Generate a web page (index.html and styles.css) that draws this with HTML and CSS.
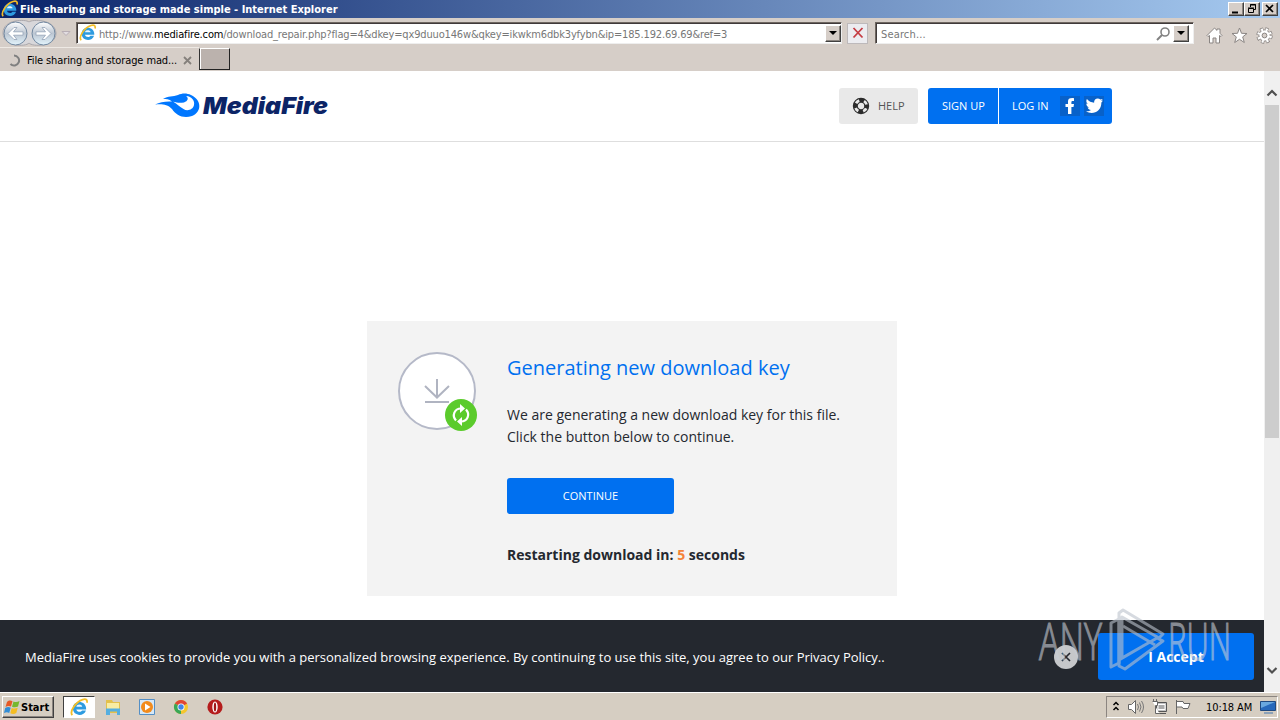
FILE: index.html
```html
<!DOCTYPE html>
<html lang="en">
<head>
    <meta charset="UTF-8">
    <meta name="viewport" content="width=device-width, initial-scale=1.0">
    <title>File sharing and storage made simple</title>
    <link rel="stylesheet" href="styles.css">
</head>
<body>
    <svg class="defs" width="0" height="0">
        <linearGradient id="nav-fill" x2="0" y2="1">
            <stop offset="0" stop-color="#ffffff"/>
            <stop offset=".5" stop-color="#bcc6d2"/>
            <stop offset="1" stop-color="#e3f4fc"/>
        </linearGradient>
        <symbol id="ie" viewBox="0 0 18 18">
            <path d="M15.300 10.800H6c.4 2.500 4.400 3 5.400 1h3.700C13.200 18 2.700 17.300 2.700 9.800c0-8.300 13.100-8 12.600 1z" fill="#2d9be0"/>
            <path d="M6 8.200h5.600c-.4-2.600-5.200-2.600-5.600 0z" fill="#eaf6fd"/>
            <path d="M2.200 16.300C-.8 13 5.500 3.400 12 1.500c3.600-1 4.600.4 4 3" fill="none" stroke="#f2bd27" stroke-width="1.700"/>
        </symbol>
    </svg>

    <div class="titlebar">
        <svg class="title-icon" width="18" height="18"><use href="#ie"/></svg>
        <span class="title-text">File sharing and storage made simple - Internet Explorer</span>
        <div class="window-buttons">
            <span class="win-btn"><svg width="14" height="12"><path d="M3 9.500h6" stroke="#000" stroke-width="2"/></svg></span>
            <span class="win-btn"><svg width="14" height="12"><path d="M5.500 4V1.500h5v5H9M5 2h6M3.500 5.500h5v4h-5zM3 5h6" fill="none" stroke="#000"/></svg></span>
            <span class="win-btn win-close"><svg width="14" height="12"><path d="M3 2l7 7M10 2L3 9" stroke="#000" stroke-width="1.700"/></svg></span>
        </div>
    </div>

    <div class="navbar">
        <svg class="nav-arrows" width="74" height="28">
            <path d="M3 14C3 0 26 0 29 3C32 0 55 0 56 14C56 28 32 28 29 24C26 28 3 28 3 14z" fill="#d8d7da" stroke="#aaa8ad"/>
            <g fill="url(#nav-fill)" stroke="#71879f">
                <circle cx="15.500" cy="14.500" r="11.500"/>
                <circle cx="43.500" cy="14.500" r="11.500"/>
            </g>
            <g fill="#fff" stroke="#94a3b8" stroke-width=".8">
                <path d="M8 14.500l6-6h3l-3.500 4.300H23v3.400h-9.500L17 20.500h-3z"/>
                <path d="M51 14.500l-6-6h-3l3.500 4.300H36v3.400h9.500L42 20.500h3z"/>
            </g>
            <path d="M62 12.500h8l-4 4z" fill="#e2dde1" stroke="#b8aeb5"/>
        </svg>
        <div class="field address">
            <svg width="18" height="18"><use href="#ie"/></svg>
            <span class="url">http://www.<b>mediafire.com</b>/download_repair.php?flag=4&amp;dkey=qx9duuo146w&amp;qkey=ikwkm6dbk3yfybn&amp;ip=185.192.69.69&amp;ref=3</span>
            <span class="dropdown"></span>
        </div>
        <span class="stop"><svg width="12" height="12"><path d="M1.500 1l9 9.500M10.500 1l-9 9.500" stroke="#c53c43" stroke-width="1.800"/></svg></span>
        <div class="field search">
            <span class="placeholder">Search...</span>
            <svg width="15" height="15"><circle cx="9" cy="6" r="4" fill="none" stroke="#828282" stroke-width="1.600"/><path d="M6 9l-5 5" stroke="#828282" stroke-width="2"/></svg>
            <span class="dropdown"></span>
        </div>
        <div class="tools">
            <svg width="17" height="17"><path d="M1 8.500L8.500 1 11 3.400V2h3v4.300L16 8.500l-1 1-1.500-1V16H10v-5H7v5H3.500V8.500L2 9.500z" fill="#fff" stroke="#8a8583"/></svg>
            <svg width="17" height="17"><path d="M8.500 1l2 5.300 5.500.2-4.300 3.400 1.600 5.600-4.800-3.200-4.800 3.200 1.600-5.600L1 6.500l5.500-.2z" fill="#fff" stroke="#8a8583"/></svg>
            <svg width="17" height="17"><circle cx="8.500" cy="8.500" r="6.400" fill="none" stroke="#8a8583" stroke-width="3.600" stroke-dasharray="3 2.030"/><circle cx="8.500" cy="8.500" r="5.600" fill="#fff" stroke="#8a8583"/><circle cx="8.500" cy="8.500" r="6" fill="none" stroke="#fff" stroke-width="2.800" stroke-dasharray="2 2.712" stroke-dashoffset="-.5"/><circle cx="8.500" cy="8.500" r="2.400" fill="#d6cec8" stroke="#8a8583"/></svg>
        </div>
    </div>

    <div class="tabs">
        <div class="tab">
            <svg width="13" height="13"><path d="M6 1.500a5 5 0 1 1-3.500 8.500" fill="none" stroke="#808080" stroke-width="2"/></svg>
            <span class="tab-title">File sharing and storage mad...</span>
            <svg width="9" height="9"><path d="M1 1l7 7M8 1L1 8" stroke="#85807c" stroke-width="1.800"/></svg>
        </div>
        <div class="new-tab"></div>
    </div>

    <div class="viewport">
        <div class="page">
            <header class="header">
                <svg class="logo" width="175" height="28">
                    <path d="M0 12.500C5 10 11 9 17 9.500C14 7 11 7 8 7C13 3.500 18 5 23 3C27 1 32 1 36 3C47 8 47 20 37 24C28 27 21 23 17 17C12 12 7 12 0 12.500z" fill="#0077ff"/>
                    <path d="M18 9.500c4 1.500 7 1.500 11 1C33 9 34 6 31 4c6 .5 9 5 8 9-1 5-7 6.500-10.500 4-4-2-6-5-10.500-7.500z" fill="#fff"/>
                    <path d="M17 9c5 2 10 1 13-.5 2-1.500 1-4-2-4.500-4-1-7 1-11 5z" fill="#0077ff"/>
                    <text x="48" y="21.500" textLength="125" lengthAdjust="spacingAndGlyphs" class="logo-text">MediaFire</text>
                </svg>
                <a class="btn help">
                    <svg width="18" height="18"><circle cx="9" cy="9" r="5.700" fill="none" stroke="#2b2b2b" stroke-width="5"/><circle cx="9" cy="9" r="5.700" fill="none" stroke="#e9e9e9" stroke-width="2.800" stroke-dasharray="4 4.954" stroke-dashoffset="-2.477"/></svg>
                    <span>HELP</span>
                </a>
                <a class="btn signup"><span>SIGN UP</span></a>
                <a class="btn login"><span>LOG IN</span>
                    <svg class="facebook" width="20" height="20"><path d="M8 18v-7H5.500V8H8V5.500C8 3 9.500 1.800 14 2.200V5c-2-.2-2.600 0-2.600 1.400V8H14l-.5 3h-2.100v7z" fill="#fff"/></svg>
                    <svg class="twitter" width="20" height="20"><path d="M2 15.300c2 .2 3.700-.3 5-1.400-1.700-.2-2.900-1-3.400-2.500h1.500C3.300 10.800 2.300 9.500 2.300 7.600l1.600.4C2.200 6.600 1.900 4.800 2.900 3c2 2.300 4.400 3.500 7.200 3.700-.4-4.200 4.200-5.500 6.300-3.100L18.700 3l-1.500 2 1.900-.4-1.700 1.900C17.500 15.500 8.500 19.600 2 15.300z" fill="#fff"/></svg>
                </a>
            </header>

            <main class="main">
                <div class="card">
                    <svg class="card-icon" width="80" height="80">
                        <circle cx="39" cy="39" r="38" fill="#fff" stroke="#b5b9c8" stroke-width="2"/>
                        <path d="M39 27v18M27 34l12 11.500L51 34M27 50h24" fill="none" stroke="#b0b4c1" stroke-width="2"/>
                        <circle cx="63" cy="63" r="16" fill="#5bcb2c"/>
                        <path d="M58 68.500c-4.500-5-1.500-12 5-12M68 57.500c4.500 5 1.500 12-5 12" fill="none" stroke="#fff" stroke-width="2.200"/>
                        <path d="M62 52l5 4.500-5 4.500zM64 65l-5 4.500 5 4.500z" fill="#fff"/>
                    </svg>
                    <div class="card-body">
                        <h1>Generating new download key</h1>
                        <p>We are generating a new download key for this file.<br>Click the button below to continue.</p>
                        <a class="continue">CONTINUE</a>
                        <p class="countdown">Restarting download in: <span>5</span> seconds</p>
                    </div>
                </div>
            </main>

            <div class="cookies">
                <span class="cookies-text">MediaFire uses cookies to provide you with a personalized browsing experience. By continuing to use this site, you agree to our Privacy Policy..</span>
                <span class="dismiss"><svg width="10" height="10"><path d="M1 1l8 8M9 1L1 9" stroke="#24282f" stroke-width="1.700"/></svg></span>
                <a class="accept">I Accept</a>
            </div>
        </div>

        <div class="scrollbar">
            <svg width="16" height="34"><path d="M3.500 24.500L8 20l4.500 4.500" fill="none" stroke="#505050" stroke-width="2.200"/></svg>
            <div class="thumb"></div>
            <svg class="scroll-down" width="16" height="34"><path d="M3.500 10L8 14.500l4.500-4.500" fill="none" stroke="#505050" stroke-width="2.200"/></svg>
        </div>

        <svg class="watermark" width="200" height="80">
            <g class="watermark-text">
                <text x="4" y="53" textLength="63" lengthAdjust="spacingAndGlyphs">ANY</text>
                <text x="133" y="53" textLength="63" lengthAdjust="spacingAndGlyphs">RUN</text>
            </g>
            <g fill="none" stroke="#bcc3cd" stroke-width="3" stroke-linejoin="round">
                <path d="M84 56l-8 4V16l8-4z"/>
                <path d="M84 53V6l4-3 40 24-4 4-37-21v41l35-20 6 3-38 28-6-3v-6l24-14"/>
                <path d="M88 19l32 19"/>
            </g>
        </svg>
    </div>

    <div class="taskbar">
        <div class="start">
            <svg width="17" height="16"><path d="M3 3c2-2 4-1.500 5.500-.8L7 7.500C5 6.500 3 7 1.500 8z" fill="#e65a26"/><path d="M9.500 2.500c2 1 4 .7 6-.5L14 7.500c-2 1-4 1-6 .2z" fill="#77b82d"/><path d="M1.200 9c2-1 3.500-1.300 5.500-.3L5.200 14C3.500 13 2 13.200 0 14z" fill="#328dd6"/><path d="M7.700 9c2 .8 4 .7 6-.3L12.300 14c-2 1.200-4 1.200-6 .2z" fill="#f4bd22"/></svg>
            Start
        </div>
        <div class="task active"><svg width="19" height="19"><use href="#ie"/></svg></div>
        <div class="task"><svg width="18" height="18"><path d="M2 2h6l1 2h7v11H2z" fill="#e3c04c"/><path d="M3 5h12v6H3z" fill="#f8eca3"/><path d="M2 17v-6.500h14V17h-3v-3.500H6V17z" fill="#55aee0"/></svg></div>
        <div class="task"><svg width="18" height="18"><path d="M1.500 1.500h15v15h-15z" fill="#d6e8f7" stroke="#548fc5"/><circle cx="9" cy="9" r="6" fill="#f28b1c"/><path d="M7 5.500l5.500 3.500L7 12.500z" fill="#fff"/></svg></div>
        <div class="task"><svg width="16" height="16"><circle cx="8" cy="8" r="7" fill="#f5c62d"/><path d="M8 8L1.900 4.500a7 7 0 0 1 12.200 0z" fill="#e04535"/><path d="M8 8v7A7 7 0 0 1 1.900 4.500z" fill="#3aa757"/><circle cx="8" cy="8" r="3.500" fill="#fff"/><circle cx="8" cy="8" r="2.700" fill="#4284e8"/></svg></div>
        <div class="task"><svg width="18" height="18"><circle cx="9" cy="9" r="7.600" fill="#b51c1c"/><ellipse cx="9" cy="9" rx="2.700" ry="5.500" fill="#fff"/><ellipse cx="9" cy="9" rx="1.200" ry="4.600" fill="#a11616"/></svg></div>

        <div class="tray">
            <svg width="8" height="12"><path d="M1.500 4L4 1.500 6.500 4M1.500 9L4 6.500 6.500 9" fill="none" stroke="#000" stroke-width="1.500"/></svg>
            <svg width="17" height="16"><path d="M1.500 5.500h3l4-4v13l-4-4h-3z" fill="#fff" stroke="#666"/><path d="M10.500 5q2 3 0 6M12.500 3.500q3 4.500 0 9M14.500 2q4 6 0 12" fill="none" stroke="#777"/></svg>
            <svg width="17" height="16"><path d="M5.500 3.500h10v9h-10z" fill="#c4c4c4" stroke="#555"/><path d="M7 5.500h7v5H7z" fill="#aaa" stroke="#fff"/><path d="M8 14.500h7" stroke="#555"/><path d="M1.500 2.500h5v4h-2v8h4" fill="#fff" stroke="#666"/><path d="M2.500 0v3M5.500 0v3" stroke="#666"/></svg>
            <svg width="17" height="16"><path d="M1.500 1v14M2 2.500h6l1 2h6l-2 5H8l-1-1.500H2" fill="#fff" stroke="#666"/></svg>
            <span class="clock">10:18 AM</span>
            <svg width="16" height="14"><path d="M.5 1.500h15v9h-15z" fill="#2769bb" stroke="#204a80"/><path d="M1 2h14L1 8z" fill="#69a8df"/><path d="M4 13h9" stroke="#8ca2b8" stroke-width="2"/></svg>
        </div>
    </div>
</body>
</html>
```
FILE: styles.css
```css
* {
    box-sizing: border-box;
}

body {
    margin: 0;
    width: 1280px;
    height: 720px;
    overflow: hidden;
    display: flex;
    flex-direction: column;
    background-color: #d6cec8;
    font-family: 'Open Sans', sans-serif;
}

svg {
    display: block;
    flex: none;
}

.defs {
    position: absolute;
}

.titlebar,
.navbar,
.tabs,
.taskbar {
    display: flex;
    align-items: center;
    flex: none;
    font-family: 'DejaVu Sans Condensed', 'DejaVu Sans', sans-serif;
    font-stretch: condensed;
    font-size: 11px;
    white-space: nowrap;
}

/* window chrome */
.titlebar {
    height: 18px;
    padding: 0 2px 0 1px;
    background: linear-gradient(to right, #0a246a, #a6caf0);
    color: #fff;
    font-weight: bold;
}

.title-text {
    margin-left: 1px;
}

.window-buttons {
    display: flex;
    margin-left: auto;
}

.win-btn,
.dropdown {
    width: 16px;
    height: 14px;
    background-color: #d6cec8;
    border: 1px solid;
    border-color: #fff #404040 #404040 #fff;
    box-shadow: inset -1px -1px #8b8580;
}

.win-close {
    margin-left: 2px;
}

.navbar {
    height: 29px;
    padding-top: 1px;
}

.field {
    display: flex;
    align-items: center;
    height: 22px;
    background-color: #fff;
    border: 1px solid;
    border-color: #6e6660 #eee #eee #6e6660;
    box-shadow: inset 1px 1px #403a3a;
    color: #777;
}

.address {
    width: 766px;
    margin-left: 2px;
    padding-left: 2px;
}

.url {
    margin: 2px 0 0 2px;
    letter-spacing: -0.155px;
}

.url b {
    color: #000;
    font-weight: normal;
}

.dropdown {
    height: 17px;
    margin-left: auto;
    display: flex;
    align-items: center;
    justify-content: center;
}

.dropdown::after {
    content: '';
    border: 4px solid transparent;
    border-top-color: #000;
    border-bottom: 0;
}

.stop {
    width: 21px;
    height: 21px;
    margin: 0 7px 0 5px;
    display: flex;
    align-items: center;
    justify-content: center;
    background-color: #ececf0;
    border: 1px solid #bdb9bb;
}

.search {
    width: 319px;
    padding: 0 4px 0 5px;
}

.placeholder {
    margin-top: 2px;
    letter-spacing: 0.15px;
}

.search svg {
    margin-left: auto;
}

.search .dropdown {
    margin-left: 2px;
}

.tools {
    display: flex;
    gap: 8px;
    margin: 4px 0 0 12px;
}

.tabs {
    height: 24px;
}

.tab {
    display: flex;
    align-items: center;
    width: 199px;
    height: 24px;
    padding: 2px 6px 0 8px;
    border-top: 1px solid #eee9e4;
}

.tab-title {
    width: 151px;
    margin: 0 5px 0 6px;
    letter-spacing: -0.11px;
}

.new-tab {
    width: 31px;
    height: 22px;
    background-color: #bbb2ad;
    border: 1px solid;
    border-color: #fff #222 #222 #333;
    box-shadow: inset 1px 0 #fff;
}

/* page */
.viewport {
    position: relative;
    display: flex;
    height: 621px;
    background-color: #fff;
}

.page {
    width: 1264px;
    display: flex;
    flex-direction: column;
}

.header {
    display: flex;
    align-items: center;
    height: 71px;
    padding: 0 152px 0 155px;
    border-bottom: 1px solid #dedede;
}

.logo-text {
    font: italic 900 23px Inter, sans-serif;
    fill: #0c2466;
}

.btn {
    display: flex;
    align-items: center;
    height: 36px;
    font-size: 11px;
    color: #fff;
    background-color: #0070f0;
    white-space: nowrap;
}

.btn span {
    margin-bottom: 2px;
}

.help {
    width: 79px;
    margin-left: auto;
    padding-left: 13px;
    gap: 8px;
    color: #555;
    background-color: #e9e9e9;
    border-radius: 3px;
}

.signup {
    width: 70px;
    margin-left: 10px;
    padding-left: 14px;
    border-radius: 3px 0 0 3px;
}

.login {
    width: 113px;
    margin-left: 1px;
    padding-left: 13px;
    border-radius: 0 3px 3px 0;
}

.login svg {
    background-color: #0861c9;
}

.facebook {
    margin-left: 11px;
}

.twitter {
    margin-left: 4px;
}

.main {
    height: 478px;
    padding: 179px 0 0 367px;
}

.card {
    display: flex;
    width: 530px;
    height: 275px;
    padding: 31px;
    background-color: #f3f3f3;
    color: #24282f;
}

.card-body {
    margin-left: 29px;
    font-size: 14px;
    line-height: 22px;
}

.card-body h1 {
    margin: 2px 0 22px;
    font-size: 20px;
    font-weight: normal;
    line-height: 28px;
    color: #0070f0;
}

.card-body p {
    margin: 0;
}

.continue {
    display: block;
    width: 167px;
    height: 36px;
    margin: 30px 0;
    border-radius: 3px;
    background-color: #0070f0;
    color: #fff;
    font-size: 11px;
    line-height: 36px;
    text-align: center;
}

.card-body .countdown {
    font-weight: bold;
}

.countdown span {
    color: #f58238;
}

.cookies {
    display: flex;
    align-items: center;
    height: 72px;
    padding: 2px 10px 0 25px;
    background-color: #24282f;
    color: #fff;
    font-size: 13px;
    white-space: nowrap;
}

.dismiss {
    display: flex;
    align-items: center;
    justify-content: center;
    width: 24px;
    height: 24px;
    margin-left: auto;
    border-radius: 50%;
    background-color: #c5c7ca;
}

.accept {
    width: 156px;
    height: 47px;
    margin: 0 0 1px 20px;
    border-radius: 3px;
    background-color: #0070f0;
    font-size: 14px;
    font-weight: bold;
    line-height: 48px;
    text-align: center;
}

.scrollbar {
    display: flex;
    flex-direction: column;
    width: 16px;
    background-color: #f0f0f0;
}

.thumb {
    height: 333px;
    margin: 0 1px;
    background-color: #cdcdcd;
}

.scroll-down {
    margin-top: auto;
}

.watermark {
    position: absolute;
    left: 1035px;
    top: 536px;
    opacity: .6;
}

.watermark-text {
    font: 300 51px 'Open Sans', sans-serif;
    fill: #c9ced6;
    stroke: #c9ced6;
    stroke-width: 1.2px;
}

/* taskbar */
.taskbar {
    height: 28px;
    padding: 2px 2px 1px;
    border-top: 1px solid #fff;
    background-color: #d6cec2;
}

.start {
    display: flex;
    align-items: center;
    width: 52px;
    height: 22px;
    margin-right: 9px;
    padding-left: 1px;
    border: 1px solid;
    border-color: #fff #404040 #404040 #fff;
    box-shadow: inset -1px -1px #8b8580;
    font-weight: bold;
}

.task {
    display: flex;
    align-items: center;
    justify-content: center;
    width: 32px;
    height: 22px;
    margin-right: 2px;
}

.active {
    background-color: #fff;
    border: 1px solid;
    border-color: #404040 #fff #fff #404040;
}

.tray {
    display: flex;
    align-items: center;
    gap: 7px;
    width: 172px;
    height: 22px;
    margin-left: auto;
    padding-left: 5px;
    border: 1px solid;
    border-color: #8b8580 #fff #fff #8b8580;
}

.clock {
    width: 47px;
    margin-left: 7px;
    letter-spacing: -0.1px;
}
```
